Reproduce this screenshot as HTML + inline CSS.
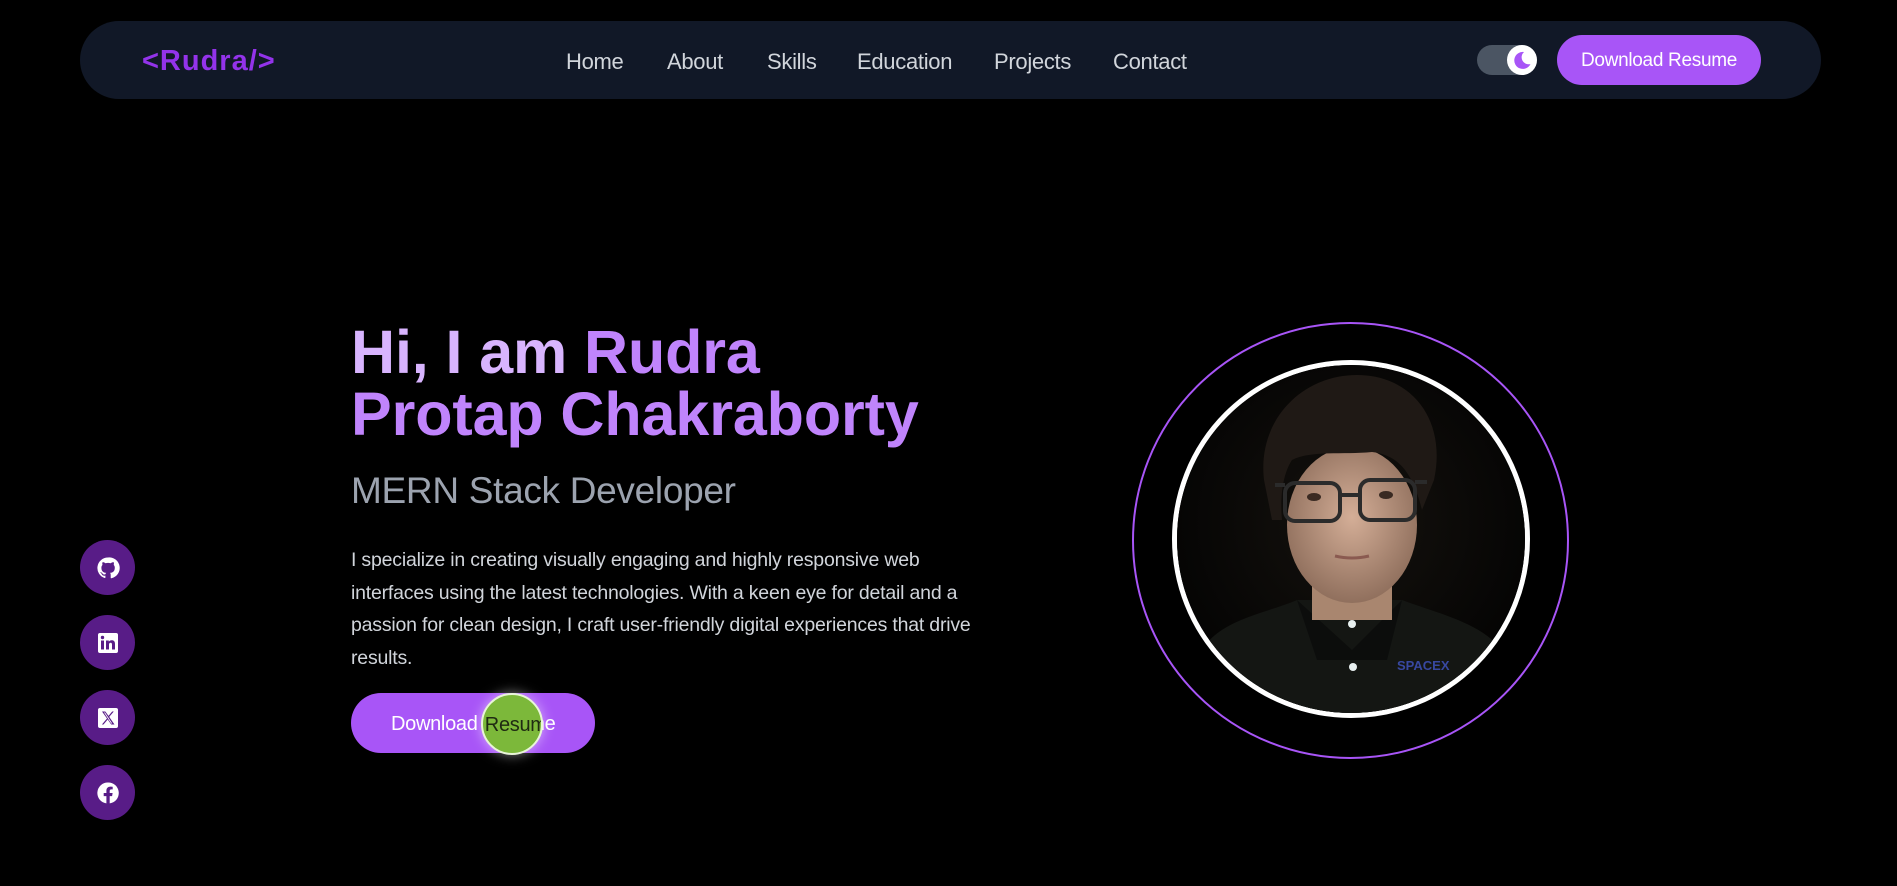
<!DOCTYPE html>
<html><head><meta charset="utf-8"><style>
*{margin:0;padding:0;box-sizing:border-box}
body{width:1897px;height:886px;background:#000;font-family:"Liberation Sans",sans-serif;position:relative;overflow:hidden}
.nav{position:absolute;left:80px;top:21px;width:1741px;height:78px;background:#111827;border-radius:40px}
.logo{position:absolute;left:142px;top:45px;font-size:29px;font-weight:bold;color:#9333ea;letter-spacing:1px}
.links a{position:absolute;top:49px;font-size:22px;color:#d1d5db;text-decoration:none;letter-spacing:-0.3px}
.track{position:absolute;left:1477px;top:45px;width:60px;height:30px;background:#4b5563;border-radius:15px}
.knob{position:absolute;left:1507px;top:45px;width:30px;height:30px;background:#fff;border-radius:50%}
.nbtn{position:absolute;left:1557px;top:35px;width:204px;height:50px;background:#a855f7;border-radius:25px;color:#fff;font-size:19px;text-align:center;line-height:52px;letter-spacing:-0.3px}
h1{position:absolute;left:351px;top:321px;font-size:61px;line-height:62px;font-weight:bold;color:#c084fc;letter-spacing:-0.1px}
h1 span{color:#d8b4fe}
.sub{position:absolute;left:351px;top:470px;font-size:37px;color:#9ca3af;letter-spacing:-0.3px}
p{position:absolute;left:351px;top:544px;width:645px;font-size:19.5px;line-height:32.5px;color:#d1d5db;letter-spacing:-0.2px}
.btn{position:absolute;left:351px;top:693px;width:244px;height:60px;background:#a855f7;border-radius:30px;color:#fff;font-size:20px;line-height:62px;padding-left:40px;overflow:hidden;letter-spacing:-0.3px}
.dot{position:absolute;left:481px;top:693px;width:62px;height:62px;border-radius:50%;background:#7cb83a;border:2px solid #e9f5d8;box-shadow:0 0 12px rgba(255,255,255,.5);overflow:hidden}
.dot span{position:absolute;left:-90px;top:0;line-height:60px;font-size:20px;color:#1f2a12;white-space:nowrap;letter-spacing:-0.3px}
.soc{position:absolute;left:80px;width:55px;height:55px;border-radius:50%;background:#581c87;display:flex;align-items:center;justify-content:center}
.outer{position:absolute;left:1132px;top:322px;width:437px;height:437px;border:2.5px solid #a855f7;border-radius:50%}
.inner{position:absolute;left:1172px;top:360px;width:358px;height:358px;border:5px solid #fff;border-radius:50%;overflow:hidden;background:#050505}
</style></head><body>
<div class="nav"></div>
<div class="logo">&lt;Rudra/&gt;</div>
<div class="links"><a style="left:566px">Home</a><a style="left:667px">About</a><a style="left:767px">Skills</a><a style="left:857px">Education</a><a style="left:994px">Projects</a><a style="left:1113px">Contact</a></div>
<div class="track"></div>
<div class="knob"><svg width="30" height="30" viewBox="0 0 30 30"><path d="M17 7a8.5 8.5 0 1 0 6.5 12A7 7 0 0 1 17 7z" fill="#a855f7"/></svg></div>
<div class="nbtn">Download Resume</div>

<h1><span>Hi, I am</span> Rudra<br>Protap Chakraborty</h1>
<div class="sub">MERN Stack Developer</div>
<p>I specialize in creating visually engaging and highly responsive web interfaces using the latest technologies. With a keen eye for detail and a passion for clean design, I craft user-friendly digital experiences that drive results.</p>
<div class="btn">Download Resume</div>
<div class="dot"><span>Download Resume</span></div>

<div class="soc" style="top:540px"><svg width="24" height="24" viewBox="0 0 24 24"><path fill="#fff" d="M12 1.5a10.5 10.5 0 0 0-3.3 20.5c.5.1.7-.2.7-.5v-1.9c-2.9.6-3.5-1.2-3.5-1.2-.5-1.2-1.2-1.5-1.2-1.5-1-.7.1-.6.1-.6 1 .1 1.6 1.1 1.6 1.1.9 1.6 2.5 1.1 3.1.9.1-.7.4-1.1.7-1.4-2.3-.3-4.8-1.2-4.8-5.2 0-1.1.4-2.1 1.1-2.8-.1-.3-.5-1.3.1-2.8 0 0 .9-.3 2.9 1.1a10 10 0 0 1 5.2 0c2-1.4 2.9-1.1 2.9-1.1.6 1.5.2 2.5.1 2.8.7.7 1.1 1.7 1.1 2.8 0 4-2.5 4.9-4.8 5.2.4.3.7 1 .7 1.9v2.9c0 .3.2.6.7.5A10.5 10.5 0 0 0 12 1.5z"/></svg></div>
<div class="soc" style="top:615px"><svg width="22" height="22" viewBox="0 0 22 22"><rect x="1" y="1" width="20" height="20" rx="2" fill="#fff"/><rect x="4" y="8.5" width="3" height="9" fill="#581c87"/><circle cx="5.5" cy="5.5" r="1.7" fill="#581c87"/><path d="M9 8.5h2.8v1.3c.5-.9 1.6-1.5 2.9-1.5 2.3 0 3.3 1.3 3.3 3.8v5.4h-3v-4.8c0-1.2-.4-1.9-1.4-1.9S12 11.6 12 12.8v4.7H9z" fill="#581c87"/></svg></div>
<div class="soc" style="top:690px"><svg width="22" height="22" viewBox="0 0 22 22"><rect x="1" y="1" width="20" height="20" rx="2" fill="#fff"/><path d="M5 4.5h3.3l3.2 4.4 3.7-4.4h1.6l-4.6 5.4 5.3 7.6h-3.3l-3.5-5-4.2 5H4.9l5.1-6z" fill="#581c87"/><path d="M7 5.5h1l7.2 11h-1z" fill="#fff"/></svg></div>
<div class="soc" style="top:765px"><svg width="24" height="24" viewBox="0 0 24 24"><path fill="#fff" d="M12 1.5a10.5 10.5 0 0 0-1.6 20.9v-7.3H7.7V12h2.7V9.7c0-2.6 1.6-4.1 4-4.1 1.1 0 2.3.2 2.3.2v2.6h-1.3c-1.3 0-1.7.8-1.7 1.6V12h2.9l-.5 3.1h-2.4v7.3A10.5 10.5 0 0 0 12 1.5z"/></svg></div>

<div class="outer"></div>
<div class="inner"><svg width="348" height="348" viewBox="5 5 348 348">
<defs><radialGradient id="bg" cx="50%" cy="45%" r="60%"><stop offset="0" stop-color="#15120e"/><stop offset="1" stop-color="#020202"/></radialGradient>
<radialGradient id="sk" cx="50%" cy="45%" r="60%"><stop offset="0" stop-color="#d4ae97"/><stop offset="1" stop-color="#8a6a58"/></radialGradient></defs>
<rect width="360" height="360" fill="url(#bg)"/>
<path d="M25 300 C40 260 90 255 125 240 L230 240 C270 255 320 265 335 300 L345 360 L15 360Z" fill="#141613"/>
<path d="M125 240 L180 290 L230 240 L215 300 L180 300 L145 300Z" fill="#0c0d0c"/>
<rect x="140" y="200" width="80" height="60" fill="#a9866f"/>
<ellipse cx="180" cy="165" rx="65" ry="78" fill="url(#sk)"/>
<path d="M92 120 C85 60 130 15 185 15 C240 15 275 60 262 120 L250 150 C240 110 225 95 200 92 C170 95 140 90 120 100 C110 115 108 140 110 160 L100 160Z" fill="#1f1915"/>
<g fill="none" stroke="#2b2b2b" stroke-width="4"><rect x="113" y="123" width="55" height="38" rx="10"/><rect x="188" y="120" width="55" height="40" rx="10"/><path d="M168 135h20M103 125h10M243 122h12"/></g>
<ellipse cx="142" cy="137" rx="7" ry="4" fill="#3a2a22"/><ellipse cx="214" cy="135" rx="7" ry="4" fill="#3a2a22"/>
<path d="M163 196 Q180 200 197 196" stroke="#8a5a50" stroke-width="3" fill="none"/>
<circle cx="180" cy="264" r="4" fill="#e8f0f0"/><circle cx="181" cy="307" r="4" fill="#e8f0f0"/>
<text x="225" y="310" font-family="Liberation Sans,sans-serif" font-size="13" font-weight="bold" fill="#3848a0">SPACEX</text>
</svg></div>
</body></html>
